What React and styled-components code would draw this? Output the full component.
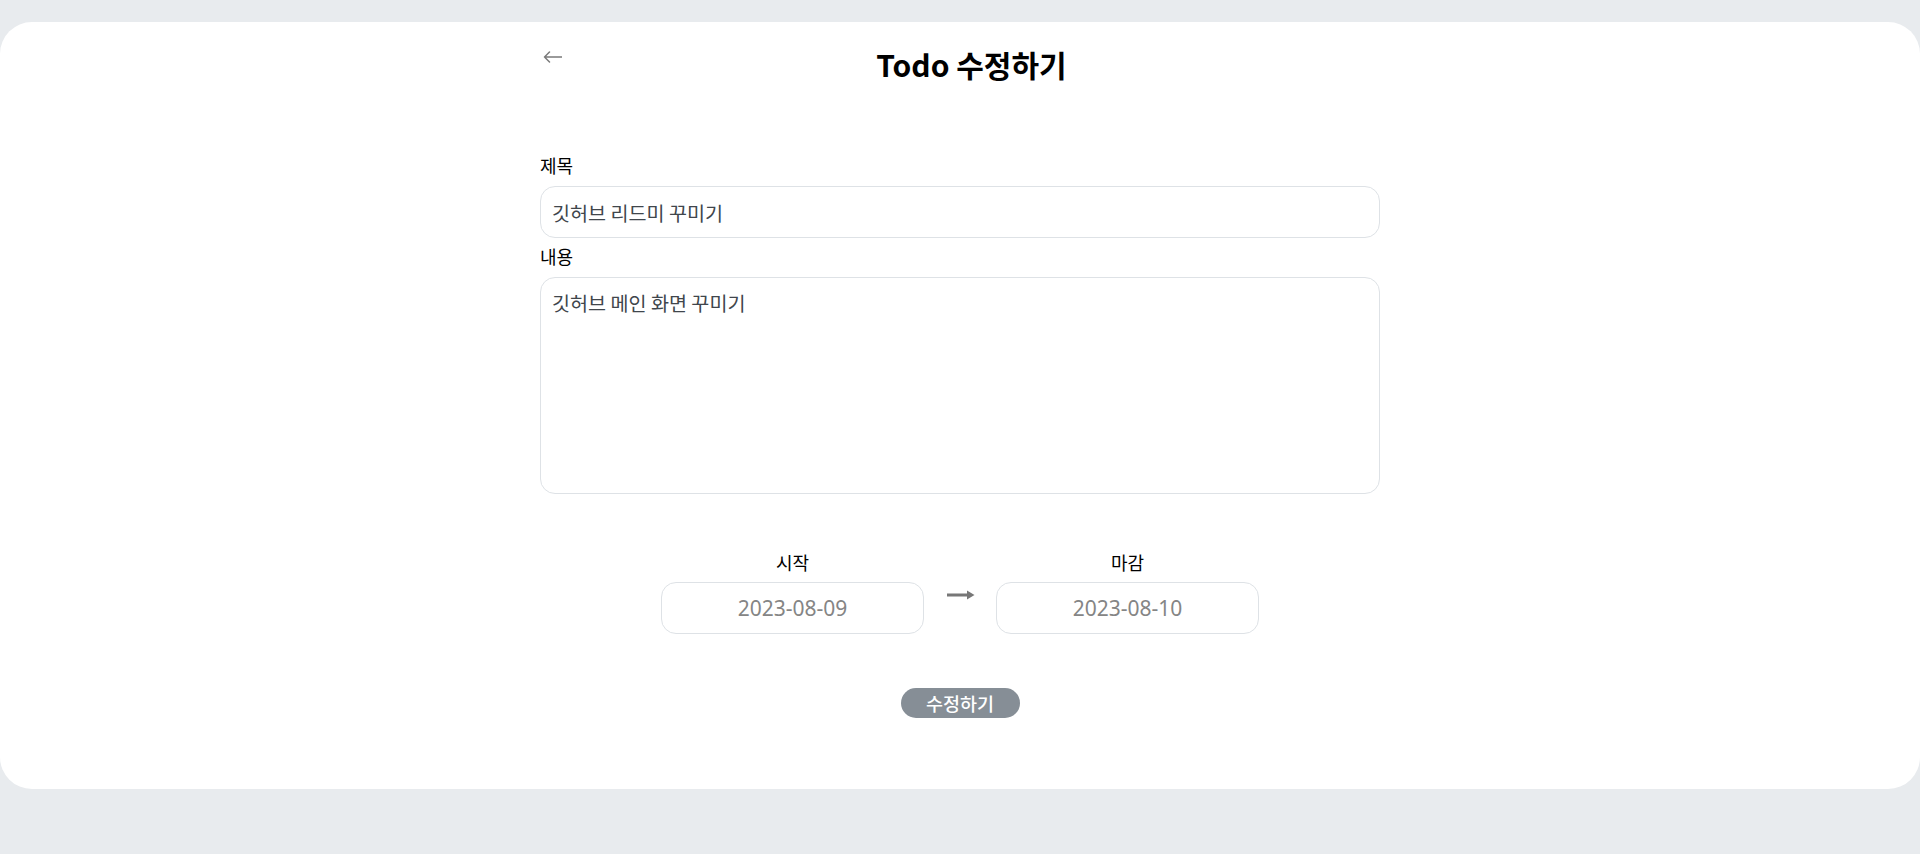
import React from "react";
import styled, { createGlobalStyle } from "styled-components";

const GlobalStyle = createGlobalStyle`
  html, body {
    margin: 0;
    padding: 0;
    background: #e8ebee;
  }
  body {
    font-family: "Noto Sans CJK KR", "Noto Sans", sans-serif;
  }
  * { box-sizing: border-box; }
`;

const Page = styled.div`
  padding-top: 22px;
  min-height: 854px;
  background: #e8ebee;
`;

const Card = styled.main`
  background: #ffffff;
  border-radius: 32px;
  padding: 21px 0 71px;
`;

const Column = styled.div`
  width: 840px;
  margin: 0 auto;
  display: flex;
  flex-direction: column;
`;

const Header = styled.header`
  display: flex;
  align-items: flex-start;
  height: 45px;
`;

const BackButton = styled.button`
  width: 23px;
  height: 28px;
  padding: 0 0 0 3px;
  margin: 0;
  border: none;
  background: transparent;
  display: flex;
  align-items: center;
  cursor: pointer;
`;

const Title = styled.h1`
  flex: 1;
  margin: 0;
  text-align: center;
  font-size: 30px;
  line-height: 43px;
  font-weight: 700;
  color: #000;
`;

const Form = styled.form`
  margin-top: 65px;
  display: flex;
  flex-direction: column;
`;

const Field = styled.div`
  display: flex;
  flex-direction: column;
  align-items: ${(p) => (p.$center ? "center" : "stretch")};
  margin-top: ${(p) => p.$top || 0}px;
`;

const Label = styled.label`
  font-size: 18px;
  line-height: 24px;
  font-weight: 400;
  color: #000;
  margin-bottom: ${(p) => p.$gap || 9}px;
`;

const TextInput = styled.input`
  height: 52px;
  border: 1px solid #dee2e6;
  border-radius: 15px;
  padding: 0 11px;
  font-family: inherit;
  font-size: 19.6px;
  color: #40464c;
  outline: none;
  background: #fff;
`;

const TextArea = styled.textarea`
  height: 217px;
  border: 1px solid #dee2e6;
  border-radius: 15px;
  padding: 11px 11px;
  font-family: inherit;
  font-size: 19.6px;
  line-height: 28px;
  color: #40464c;
  outline: none;
  resize: none;
  background: #fff;
`;

const DateRow = styled.div`
  margin-top: 56px;
  display: flex;
  justify-content: center;
  align-items: flex-start;
  gap: 21px;
`;

const DateBox = styled.input`
  width: 263px;
  height: 52px;
  border: 1px solid #dee2e6;
  border-radius: 15px;
  text-align: center;
  font-family: "Noto Sans", sans-serif;
  font-size: 21px;
  color: #858585;
  outline: none;
  background: #fff;
`;

const DateArrow = styled.div`
  margin-top: 37px;
  width: 30px;
  height: 16px;
  display: flex;
  align-items: center;
  justify-content: flex-end;
`;

const SubmitRow = styled.div`
  margin-top: 54px;
  display: flex;
  justify-content: center;
`;

const SubmitButton = styled.button`
  width: 119px;
  height: 30px;
  border: none;
  border-radius: 15px;
  background: #868e96;
  color: #fff;
  font-family: inherit;
  font-size: 18.5px;
  font-weight: 500;
  line-height: 30px;
  padding: 0;
  cursor: pointer;
`;

export default function App() {
  return (
    <Page>
      <GlobalStyle />
      <Card>
        <Column>
          <Header>
            <BackButton type="button" aria-label="뒤로">
              <svg width="19" height="12" viewBox="0 0 19 12" fill="none">
                <path
                  d="M19 6H1.5M6.5 1L1.5 6L6.5 11"
                  stroke="#7a7a7a"
                  strokeWidth="1.5"
                  strokeLinecap="round"
                  strokeLinejoin="round"
                />
              </svg>
            </BackButton>
            <Title>Todo 수정하기</Title>
          </Header>
          <Form onSubmit={(e) => e.preventDefault()}>
            <Field>
              <Label>제목</Label>
              <TextInput defaultValue="깃허브 리드미 꾸미기" />
            </Field>
            <Field $top={6}>
              <Label>내용</Label>
              <TextArea defaultValue="깃허브 메인 화면 꾸미기" />
            </Field>
            <DateRow>
              <Field $center>
                <Label $gap={8}>시작</Label>
                <DateBox defaultValue="2023-08-09" />
              </Field>
              <DateArrow>
                <svg width="28" height="12" viewBox="0 0 28 12">
                  <rect x="0" y="4.5" width="22" height="3" fill="#777" />
                  <path d="M20 1.5L27.5 6L20 10.5Z" fill="#777" />
                </svg>
              </DateArrow>
              <Field $center>
                <Label $gap={8}>마감</Label>
                <DateBox defaultValue="2023-08-10" />
              </Field>
            </DateRow>
            <SubmitRow>
              <SubmitButton type="submit">수정하기</SubmitButton>
            </SubmitRow>
          </Form>
        </Column>
      </Card>
    </Page>
  );
}
